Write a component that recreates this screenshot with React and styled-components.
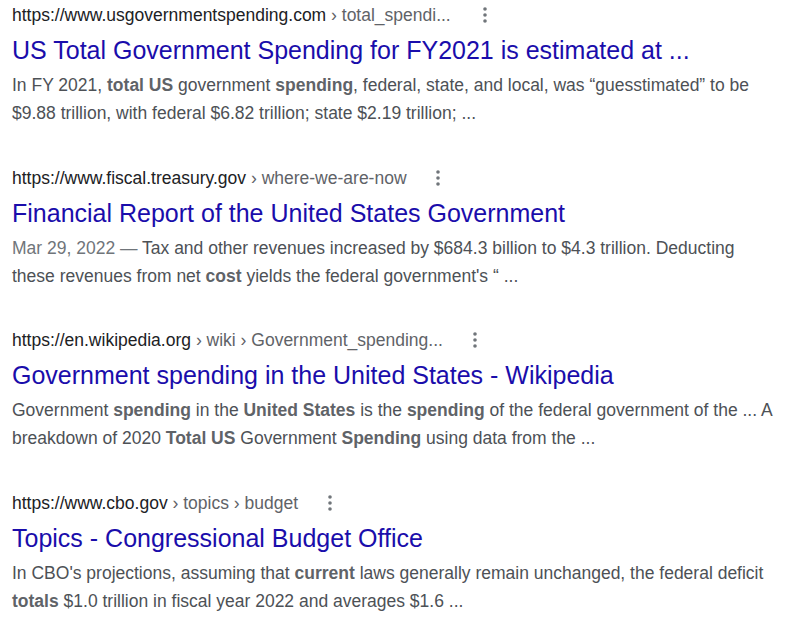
import React from "react";
import styled, { createGlobalStyle } from "styled-components";

const GlobalStyle = createGlobalStyle`
  body {
    margin: 0;
    background: #ffffff;
    font-family: "Liberation Sans", Arial, sans-serif;
  }
`;

const Page = styled.div`
  display: flex;
  flex-direction: column;
  gap: 39.5px;
  padding: 4px 12px 0 12px;
`;

const Result = styled.div`
  display: flex;
  flex-direction: column;
`;

const UrlRow = styled.div`
  display: flex;
  align-items: center;
  height: 22px;
  font-size: 17.5px;
  line-height: 22px;
  white-space: nowrap;
`;

const UrlText = styled.span`
  color: #202124;
`;

const Crumbs = styled.span`
  color: #5f6368;
`;

const MenuButton = styled.span`
  display: flex;
  align-items: center;
  justify-content: center;
  width: 20px;
  height: 22px;
  margin-left: ${(p) => p.$gap}px;
`;

const Title = styled.a`
  margin-top: 8px;
  font-size: 25px;
  line-height: 32px;
  color: #1a0dab;
  text-decoration: none;
  white-space: nowrap;
`;

const Snippet = styled.div`
  margin-top: 5px;
  font-size: 17.5px;
  line-height: 28px;
  color: #4d5156;
  max-width: 766px;
`;

const Strong = styled.b`
  color: #5f6368;
  font-weight: bold;
`;

const DateText = styled.span`
  color: #70757a;
`;

function Dots() {
  return (
    <svg width="4" height="16" viewBox="0 0 4 16">
      <circle cx="2" cy="2" r="1.8" fill="#70757a" />
      <circle cx="2" cy="8" r="1.8" fill="#70757a" />
      <circle cx="2" cy="14" r="1.8" fill="#70757a" />
    </svg>
  );
}

const results = [
  {
    domain: "https://www.usgovernmentspending.com",
    crumbs: "› total_spendi...",
    gap: 24,
    title: "US Total Government Spending for FY2021 is estimated at ...",
    snippet: (
      <>
        In FY 2021, <Strong>total US</Strong> government <Strong>spending</Strong>,
        federal, state, and local, was “guesstimated” to be $9.88 trillion, with
        federal $6.82 trillion; state $2.19 trillion; ...
      </>
    ),
  },
  {
    domain: "https://www.fiscal.treasury.gov",
    crumbs: "› where-we-are-now",
    gap: 21,
    title: "Financial Report of the United States Government",
    snippet: (
      <>
        <DateText>Mar 29, 2022 — </DateText>Tax and other revenues increased by
        $684.3 billion to $4.3 trillion. Deducting these revenues from net{" "}
        <Strong>cost</Strong> yields the federal government's “ ...
      </>
    ),
  },
  {
    domain: "https://en.wikipedia.org",
    crumbs: "› wiki › Government_spending...",
    gap: 22,
    title: "Government spending in the United States - Wikipedia",
    snippet: (
      <>
        Government <Strong>spending</Strong> in the <Strong>United States</Strong>{" "}
        is the <Strong>spending</Strong> of the federal government of the ... A
        breakdown of 2020 <Strong>Total US</Strong> Government{" "}
        <Strong>Spending</Strong> using data from the ...
      </>
    ),
  },
  {
    domain: "https://www.cbo.gov",
    crumbs: "› topics › budget",
    gap: 22,
    title: "Topics - Congressional Budget Office",
    snippet: (
      <>
        In CBO's projections, assuming that <Strong>current</Strong> laws generally
        remain unchanged, the federal deficit <Strong>totals</Strong> $1.0 trillion
        in fiscal year 2022 and averages $1.6 ...
      </>
    ),
  },
];

export default function App() {
  return (
    <>
      <GlobalStyle />
      <Page>
        {results.map((r) => (
          <Result key={r.domain}>
            <UrlRow>
              <UrlText>
                {r.domain} <Crumbs>{r.crumbs}</Crumbs>
              </UrlText>
              <MenuButton $gap={r.gap}>
                <Dots />
              </MenuButton>
            </UrlRow>
            <Title href="#">{r.title}</Title>
            <Snippet>{r.snippet}</Snippet>
          </Result>
        ))}
      </Page>
    </>
  );
}
